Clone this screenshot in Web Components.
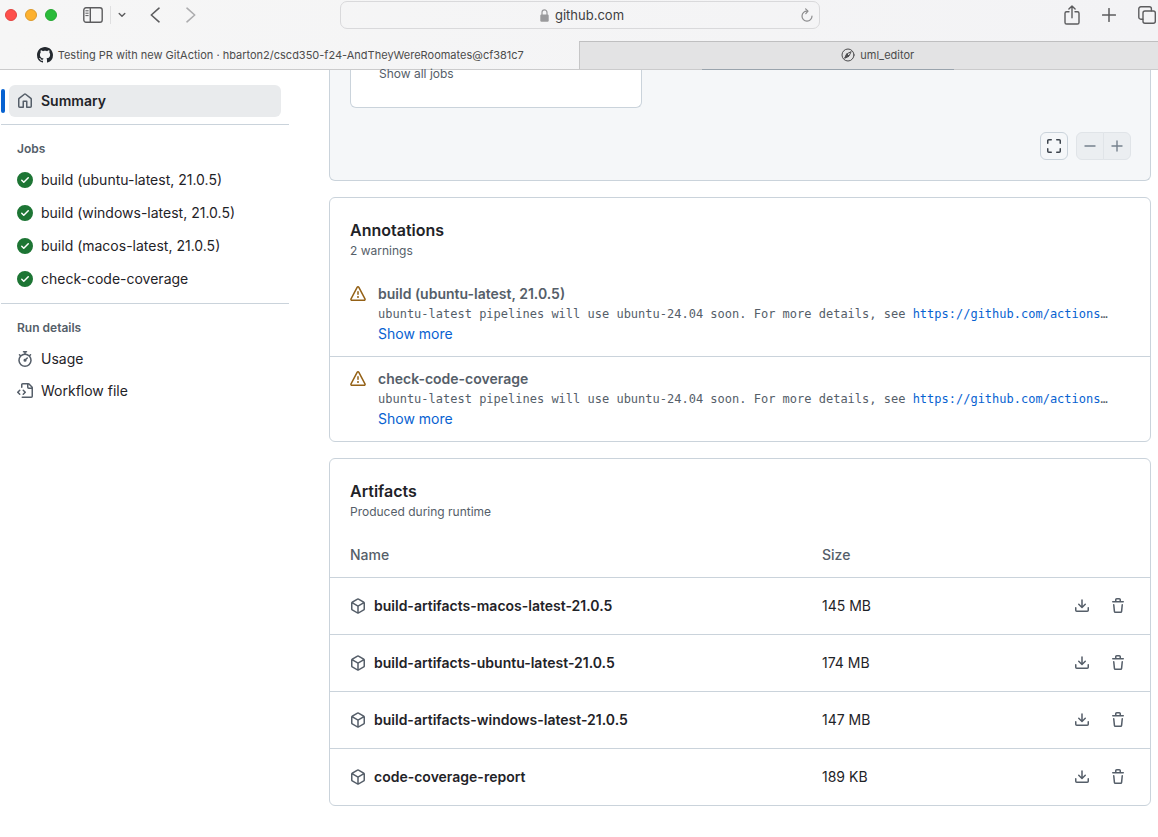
<!DOCTYPE html>
<html lang="en">
<head>
<meta charset="utf-8">
<meta name="viewport" content="width=device-width, initial-scale=1">
<title>Testing PR with new GitAction</title>
<style>
  :root {
    --fg: #1f2328;
    --muted: #555e69;
    --border: #cad3db;
    --accent: #0762d1;
    --success: #1d7534;
    --warning: #946116;
    --canvas: #f5f7f9;
  }
  body {
    margin: 0;
    background: #fff;
    color: var(--fg);
    font: 14px/20px Inter, "Liberation Sans", sans-serif;
  }
</style>
</head>
<body>
<run-page></run-page>

<script>
const define = (name, html, setup) => {
  const template = document.createElement('template');
  template.innerHTML = html;
  customElements.define(name, class extends HTMLElement {
    constructor() {
      super();
      this.attachShadow({ mode: 'open' }).append(template.content.cloneNode(true));
    }
    connectedCallback() { if (setup) setup(this, this.shadowRoot); }
  });
};

/* Filled 16px icons */
const ICONS = {
  home: 'M6.906.664a1.749 1.749 0 0 1 2.187 0l5.25 4.2c.415.332.657.835.657 1.367v7.019A1.75 1.75 0 0 1 13.25 15h-3.5a.75.75 0 0 1-.75-.75V9H7v5.25a.75.75 0 0 1-.75.75h-3.5A1.75 1.75 0 0 1 1 13.25V6.23c0-.531.242-1.034.657-1.366l5.25-4.2Zm1.25 1.171a.25.25 0 0 0-.312 0l-5.25 4.2a.25.25 0 0 0-.094.196v7.019c0 .138.112.25.25.25H5.5V8.25a.75.75 0 0 1 .75-.75h3.5a.75.75 0 0 1 .75.75v5.25h2.75a.25.25 0 0 0 .25-.25V6.23a.25.25 0 0 0-.094-.195Z',
  check: 'M8 16A8 8 0 1 1 8 0a8 8 0 0 1 0 16Zm3.78-9.72a.751.751 0 0 0-.018-1.042.751.751 0 0 0-1.042-.018L6.75 9.19 5.28 7.72a.751.751 0 0 0-1.042.018.751.751 0 0 0-.018 1.042l2 2a.75.75 0 0 0 1.06 0Z',
  stopwatch: 'M5.75.75A.75.75 0 0 1 6.5 0h3a.75.75 0 0 1 0 1.5h-.75v1l-.001.041a6.724 6.724 0 0 1 3.464 1.435l.007-.006.75-.75a.749.749 0 0 1 1.275.326.749.749 0 0 1-.215.734l-.75.75-.006.007a6.75 6.75 0 1 1-10.548 0L2.72 5.03l-.75-.75a.751.751 0 0 1 .018-1.042.751.751 0 0 1 1.042-.018l.75.75.007.006A6.72 6.72 0 0 1 7.25 2.541V1.5H6.5a.75.75 0 0 1-.75-.75ZM8 14.5a5.25 5.25 0 1 0-.001-10.501A5.25 5.25 0 0 0 8 14.5Zm.389-6.7 1.33-1.33a.75.75 0 1 1 1.061 1.06L9.45 8.861A1.503 1.503 0 0 1 8 10.75a1.499 1.499 0 1 1 .389-2.95Z',
  workflow: 'M4 1.75C4 .784 4.784 0 5.75 0h5.586c.464 0 .909.184 1.237.513l2.914 2.914c.329.328.513.773.513 1.237v8.586A1.75 1.75 0 0 1 14.25 15h-9a.75.75 0 0 1 0-1.5h9a.25.25 0 0 0 .25-.25V6h-2.75A1.75 1.75 0 0 1 10 4.25V1.5H5.75a.25.25 0 0 0-.25.25v2.5a.75.75 0 0 1-1.5 0Zm1.72 4.97a.75.75 0 0 1 1.06 0l2 2a.75.75 0 0 1 0 1.06l-2 2a.749.749 0 0 1-1.275-.326.749.749 0 0 1 .215-.734l1.47-1.47-1.47-1.47a.75.75 0 0 1 0-1.06ZM3.28 7.78 1.81 9.25l1.47 1.47a.751.751 0 0 1-.018 1.042.751.751 0 0 1-1.042.018l-2-2a.75.75 0 0 1 0-1.06l2-2a.751.751 0 0 1 1.042.018.751.751 0 0 1 .018 1.042Zm8.22-6.218V4.25c0 .138.112.25.25.25h2.688l-.011-.013-2.914-2.914-.013-.011Z',
  alert: 'M6.457 1.047c.659-1.234 2.427-1.234 3.086 0l6.082 11.378A1.75 1.75 0 0 1 14.082 15H1.918a1.75 1.75 0 0 1-1.543-2.575Zm1.763.707a.25.25 0 0 0-.44 0L1.698 13.132a.25.25 0 0 0 .22.368h12.164a.25.25 0 0 0 .22-.368Zm.53 3.996v2.5a.75.75 0 0 1-1.5 0v-2.5a.75.75 0 0 1 1.5 0ZM9 11a1 1 0 1 1-2 0 1 1 0 0 1 2 0Z',
  package: 'm8.878.392 5.25 3.045c.54.314.872.89.872 1.514v6.098a1.75 1.75 0 0 1-.872 1.514l-5.25 3.045a1.75 1.75 0 0 1-1.756 0l-5.25-3.045A1.75 1.75 0 0 1 1 11.049V4.951c0-.624.332-1.201.872-1.514L7.122.392a1.75 1.75 0 0 1 1.756 0ZM7.875 1.69l-4.63 2.685L8 7.133l4.755-2.758-4.63-2.685a.248.248 0 0 0-.25 0ZM2.5 5.677v5.372c0 .09.047.171.125.216l4.625 2.683V8.432Zm6.25 8.271 4.625-2.683a.25.25 0 0 0 .125-.216V5.677L8.75 8.432Z',
  download: 'M2.75 14A1.75 1.75 0 0 1 1 12.25v-2.5a.75.75 0 0 1 1.5 0v2.5c0 .138.112.25.25.25h10.5a.25.25 0 0 0 .25-.25v-2.5a.75.75 0 0 1 1.5 0v2.5A1.75 1.75 0 0 1 13.25 14Z M7.25 7.689V2a.75.75 0 0 1 1.5 0v5.689l1.97-1.969a.749.749 0 1 1 1.06 1.06l-3.25 3.25a.749.749 0 0 1-1.06 0L4.22 6.78a.749.749 0 1 1 1.06-1.06l1.97 1.969Z',
  trash: 'M11 1.75V3h2.25a.75.75 0 0 1 0 1.5H2.75a.75.75 0 0 1 0-1.5H5V1.75C5 .784 5.784 0 6.75 0h2.5C10.216 0 11 .784 11 1.75ZM4.496 6.675l.66 6.6a.25.25 0 0 0 .249.225h5.19a.25.25 0 0 0 .249-.225l.66-6.6a.75.75 0 0 1 1.492.149l-.66 6.6A1.748 1.748 0 0 1 10.595 15h-5.19a1.75 1.75 0 0 1-1.741-1.575l-.66-6.6a.75.75 0 1 1 1.492-.15ZM6.5 1.75V3h3V1.75a.25.25 0 0 0-.25-.25h-2.5a.25.25 0 0 0-.25.25Z',
  github: 'M8 0c4.42 0 8 3.58 8 8a8.013 8.013 0 0 1-5.45 7.59c-.4.08-.55-.17-.55-.38 0-.27.01-1.13.01-2.2 0-.75-.25-1.23-.54-1.48 1.78-.2 3.65-.88 3.65-3.95 0-.88-.31-1.59-.82-2.15.08-.2.36-1.02-.08-2.12 0 0-.67-.22-2.2.82-.64-.18-1.32-.27-2-.27-.68 0-1.36.09-2 .27-1.53-1.03-2.2-.82-2.2-.82-.44 1.1-.16 1.92-.08 2.12-.51.56-.82 1.28-.82 2.15 0 3.06 1.86 3.75 3.64 3.95-.23.2-.44.55-.51 1.07-.46.21-1.61.55-2.33-.66-.15-.24-.6-.83-1.23-.82-.67.01-.27.38.01.53.34.19.73.9.82 1.13.16.45.68 1.31 2.69.94 0 .67.01 1.3.01 1.49 0 .21-.15.45-.55.38A7.995 7.995 0 0 1 0 8c0-4.42 3.58-8 8-8Z',
  fullscreen: 'M1.75 10a.75.75 0 0 1 .75.75v2.5c0 .138.112.25.25.25h2.5a.75.75 0 0 1 0 1.5h-2.5A1.75 1.75 0 0 1 1 13.25v-2.5a.75.75 0 0 1 .75-.75Zm12.5 0a.75.75 0 0 1 .75.75v2.5A1.75 1.75 0 0 1 13.25 15h-2.5a.75.75 0 0 1 0-1.5h2.5a.25.25 0 0 0 .25-.25v-2.5a.75.75 0 0 1 .75-.75ZM2.75 2.5a.25.25 0 0 0-.25.25v2.5a.75.75 0 0 1-1.5 0v-2.5C1 1.784 1.784 1 2.75 1h2.5a.75.75 0 0 1 0 1.5ZM10 1.75a.75.75 0 0 1 .75-.75h2.5c.966 0 1.75.784 1.75 1.75v2.5a.75.75 0 0 1-1.5 0v-2.5a.25.25 0 0 0-.25-.25h-2.5a.75.75 0 0 1-.75-.75Z'
};

/* Stroked icons: [width, height, stroke width, markup] */
const LINES = {
  sidebar: [20, 16, 1.4, '<rect x=".8" y=".8" width="18.4" height="14.4" rx="2.2"/><path d="M7.3 1v14"/><path d="M2.8 3.8h2.4M2.8 6.2h2.4M2.8 8.6h2.4" stroke-width="1"/>'],
  chevron: [8, 6, 1.4, '<path d="M1.2 1.4 4 4.200l2.800-2.800"/>'],
  back: [10, 16, 1.6, '<path d="M9 1.2 1.3 8 9 14.8"/>'],
  forward: [10, 16, 1.6, '<path d="M1 1.2 8.7 8 1 14.8"/>'],
  reload: [12, 14, 1.2, '<path d="M6.300 3.100A5 5 0 1 0 11 8"/><path d="M4.600.8 7 3.200 4.800 5.600"/>'],
  share: [16, 20, 1.4, '<path d="M5 6.7H2.6A1.6 1.6 0 0 0 1 8.3V17.4A1.6 1.6 0 0 0 2.6 19H13.4A1.6 1.6 0 0 0 15 17.4V8.3A1.6 1.6 0 0 0 13.4 6.7H11M8 12.8V1M4.9 3.9 8 .9l3.1 3"/>'],
  plus: [14, 14, 1.5, '<path d="M7 .6v12.8M.6 7h12.8"/>'],
  tabs: [18, 18, 1.4, '<rect x="5" y="5" width="12.3" height="12.3" rx="2"/><path d="M4.8 13.2H2.8a2 2 0 0 1-2-2V2.8a2 2 0 0 1 2-2h8.6a2 2 0 0 1 2 2V4.7"/>'],
  compass: [14, 14, 1, '<circle cx="7" cy="7" r="6"/><path d="M10 4 8 8 4 10 6 6Z"/><path d="M4 10 8 8 6 6Z" fill="currentColor"/>'],
  minus: [16, 16, 1.4, '<path d="M3 8h10"/>'],
  zoomin: [16, 16, 1.4, '<path d="M3 8h10M8 3v10"/>']
};

define('ui-icon', `
  <style>
    :host { display: inline-flex; flex: none; }
    svg { display: block; }
  </style>`, (el, root) => {
  const name = el.getAttribute('name');
  if (root.querySelector('svg')) return;
  const holder = document.createElement('template');
  if (ICONS[name]) {
    holder.innerHTML = `<svg width="16" height="16" viewBox="0 0 16 16" fill="currentColor" aria-hidden="true"><path d="${ICONS[name]}"/></svg>`;
  } else {
    const [w, h, s, body] = LINES[name];
    holder.innerHTML = `<svg width="${w}" height="${h}" viewBox="0 0 ${w} ${h}" fill="none" stroke="currentColor" stroke-width="${s}" stroke-linecap="round" stroke-linejoin="round" aria-hidden="true">${body}</svg>`;
  }
  root.append(holder.content);
});

define('browser-tab', `
  <style>
    :host {
      display: block; flex: 1 1 0; min-width: 0; box-sizing: border-box;
      border-top: 1px solid transparent; padding: 0 18px 2px 0;
      color: #4c4c4c; font-size: 11px; line-height: 16px;
    }
    :host([background]) {
      background: #e3e3e4; border-top-color: #bfbfc0; border-left: 1px solid #c6c6c7;
      padding: 0 0 2px 18px;
    }
    a {
      display: flex; align-items: center; justify-content: center; gap: 5px;
      height: 100%; color: inherit; text-decoration: none; white-space: nowrap;
    }
    ::slotted(ui-icon) { color: #24292f; }
    :host([background]) ::slotted(ui-icon) { color: #4c4c4e; }
  </style>
  <a href="#"><slot name="icon"></slot><slot></slot></a>`);

define('browser-chrome', `
  <style>
    :host { display: block; background: linear-gradient(90deg, #f6f6f6, #f3f3f5); border-bottom: 1px solid #cbcbcc; }
    .toolbar {
      display: grid; grid-template-columns: 1fr minmax(0, 480px) 1fr; align-items: center;
      padding: 1px 0 12px 2px;
    }
    .side { display: flex; align-items: center; color: #5c5c5e; }
    .lights { display: flex; gap: 8px; margin: 0 26px 0 3px; }
    .lights button { width: 12px; height: 12px; border-radius: 50%; box-sizing: border-box; }
    .close { background: #fe4f4b; border: 1px solid #e2443f; }
    .min { background: #fdb12f; border: 1px solid #dc9a2c; }
    .max { background: #2abb3a; border: 1px solid #26a834; }
    button { display: flex; padding: 0; border: 0; background: none; color: inherit; font: inherit; }
    .menu { height: 18px; align-items: center; margin-left: 7px; padding-left: 7px; border-left: 1px solid #dfdfe0; }
    .back { margin-left: 24px; }
    .forward { margin-left: 26px; color: #acacae; }
    .address {
      display: flex; align-items: center; height: 28px; box-sizing: border-box;
      border: 1px solid #d9d9db; border-radius: 7px; padding: 0 6px 0 22px;
    }
    .where { flex: 1; display: flex; align-items: center; justify-content: center; gap: 6px; }
    input {
      field-sizing: content; width: auto; padding: 0; border: 0; outline: 0; background: none;
      color: #3f3f41; font: 13px/18px Inter, "Liberation Sans", sans-serif;
    }
    .reload { color: #8b8b8d; }
    .end { justify-content: flex-end; gap: 22px; padding-right: 2px; }
    .tabs { display: flex; height: 28px; }
  </style>
  <div class="toolbar">
    <div class="side">
      <div class="lights">
        <button class="close" aria-label="Close"></button>
        <button class="min" aria-label="Minimise"></button>
        <button class="max" aria-label="Zoom"></button>
      </div>
      <button aria-label="Sidebar"><ui-icon name="sidebar"></ui-icon></button>
      <button class="menu" aria-label="Tab groups"><ui-icon name="chevron"></ui-icon></button>
      <button class="back" aria-label="Back"><ui-icon name="back"></ui-icon></button>
      <button class="forward" aria-label="Forward"><ui-icon name="forward"></ui-icon></button>
    </div>
    <div class="address">
      <div class="where">
        <svg width="9" height="13" viewBox="0 0 9 13" aria-hidden="true"><rect x=".3" y="5.5" width="8.4" height="7.3" rx="1.2" fill="#9a9a9c"/><path d="M2 6V3.5a2.5 2.7 0 0 1 5 0V6" fill="none" stroke="#9a9a9c" stroke-width="1.2"/></svg>
        <input type="text" value="github.com" aria-label="Address">
      </div>
      <button class="reload" aria-label="Reload"><ui-icon name="reload"></ui-icon></button>
    </div>
    <div class="side end">
      <button aria-label="Share"><ui-icon name="share"></ui-icon></button>
      <button aria-label="New tab"><ui-icon name="plus"></ui-icon></button>
      <button aria-label="Tab overview"><ui-icon name="tabs"></ui-icon></button>
    </div>
  </div>
  <div class="tabs"><slot></slot></div>`);

define('nav-item', `
  <style>
    :host { display: block; color: var(--muted); }
    :host([status]) { color: var(--success); }
    a {
      display: flex; align-items: center; gap: 8px; height: 32px; box-sizing: border-box;
      margin: 0 8px; padding: 0 8px; border-radius: 6px; color: inherit; text-decoration: none;
    }
    span { color: var(--fg); }
    :host([current]) { display: flex; align-items: center; }
    :host([current])::before { content: ""; width: 4px; height: 24px; border-radius: 6px; background: var(--accent); }
    :host([current]) a { flex: 1; margin-left: 4px; background: #e9ebed; font-weight: 600; }
  </style>
  <a href="#"><slot name="icon"></slot><span><slot></slot></span></a>`);

define('nav-group', `
  <style>
    :host { display: block; border-top: 1px solid var(--border); padding: 15px 0 8px; }
    h2 { margin: 0 16px 6px; color: var(--muted); font-size: 12px; line-height: 18px; font-weight: 600; }
    div { display: grid; }
    :host([spaced]) div { gap: 1px; }
  </style>
  <h2><slot name="title"></slot></h2>
  <div><slot></slot></div>`);

define('content-card', `
  <style>
    :host { display: block; border: 1px solid var(--border); border-radius: 6px; background: #fff; }
    header { padding: 20px 20px 12px; }
    h2 { margin: 0; font-size: 16px; line-height: 24px; font-weight: 600; }
    p { margin: 0; color: var(--muted); font-size: 12px; line-height: 18px; }
  </style>
  <header><h2><slot name="title"></slot></h2><p><slot name="subtitle"></slot></p></header>
  <slot></slot>`);

define('run-graph', `
  <style>
    :host {
      display: block; border: 1px solid var(--border); border-top: 0;
      border-radius: 0 0 6px 6px; background: var(--canvas);
    }
    .nodes { display: flex; align-items: flex-start; gap: 60px; padding: 0 20px; }
    .node {
      flex: 0 1 292px; box-sizing: border-box; border: 1px solid var(--border); border-top: 0;
      border-radius: 0 0 6px 6px; background: #fff; padding: 0 28px 24px;
    }
    a { display: block; color: var(--muted); font-size: 12px; line-height: 18px; text-decoration: none; margin-top: -5px; }
    .next { flex: 0 1 252px; height: 1px; margin-top: -1px; background: #9aa4ad; }
    .tools { display: flex; justify-content: flex-end; gap: 8px; padding: 24px 19px 20px; }
    .zoom { display: flex; }
    button {
      display: flex; align-items: center; justify-content: center; width: 28px; height: 28px;
      box-sizing: border-box; padding: 0; border: 1px solid var(--border); border-radius: 6px;
      background: var(--canvas); color: #3d444d;
    }
    .zoom button { background: #ebeef1; border-color: #e0e4e8; color: #76818d; }
    .zoom button:first-child { border-radius: 6px 0 0 6px; }
    .zoom button:last-child { border-radius: 0 6px 6px 0; margin-left: -1px; }
  </style>
  <div class="nodes">
    <div class="node"><a href="#">Show all jobs</a></div>
    <div class="next"></div>
  </div>
  <div class="tools">
    <button aria-label="Full screen"><ui-icon name="fullscreen"></ui-icon></button>
    <div class="zoom">
      <button aria-label="Zoom out"><ui-icon name="minus"></ui-icon></button>
      <button aria-label="Zoom in"><ui-icon name="zoomin"></ui-icon></button>
    </div>
  </div>`);

define('run-annotation', `
  <style>
    :host { display: flex; gap: 12px; padding: 12px 20px; }
    :host(:not(:last-of-type)) { border-bottom: 1px solid var(--border); }
    .mark { color: var(--warning); margin-top: 2px; }
    .body { min-width: 0; flex: 1; }
    h3 { margin: 0; color: var(--muted); font-size: 14px; line-height: 20px; font-weight: 600; }
    p {
      margin: 0; color: var(--muted); font: 12px/20px "DejaVu Sans Mono", "Liberation Mono", monospace;
      white-space: nowrap; overflow: hidden; text-overflow: ellipsis;
    }
    a { color: var(--accent); text-decoration: none; }
    button { display: block; padding: 0; border: 0; background: none; color: var(--accent); font: inherit; }
  </style>
  <ui-icon class="mark" name="alert"></ui-icon>
  <div class="body">
    <h3><slot></slot></h3>
    <p>ubuntu-latest pipelines will use ubuntu-24.04 soon. For more details, see <a href="#">https://github.com/actions</a>…</p>
    <button>Show more</button>
  </div>`);

const ARTIFACTS = [
  ['build-artifacts-macos-latest-21.0.5', '145 MB'],
  ['build-artifacts-ubuntu-latest-21.0.5', '174 MB'],
  ['build-artifacts-windows-latest-21.0.5', '147 MB'],
  ['code-coverage-report', '189 KB']
];

define('artifact-table', `
  <style>
    :host { display: block; }
    table { width: 100%; border-collapse: separate; border-spacing: 0; table-layout: fixed; }
    th, td { padding: 0; text-align: left; height: 56px; }
    th { height: 44px; color: var(--muted); font-weight: 500; }
    td { border-top: 1px solid var(--border); }
    th:first-child { width: 60%; }
    th:first-child, td:first-child { padding-left: 20px; box-sizing: border-box; }
    .name { display: flex; align-items: center; gap: 8px; color: var(--muted); }
    .name a { color: var(--fg); font-weight: 600; text-decoration: none; }
    .actions { display: flex; justify-content: flex-end; gap: 4px; padding-right: 16px; }
    button {
      display: flex; align-items: center; justify-content: center; width: 32px; height: 32px;
      padding: 0; border: 0; border-radius: 6px; background: none; color: var(--muted);
    }
  </style>
  <table>
    <thead><tr><th scope="col">Name</th><th scope="col">Size</th><th></th></tr></thead>
    <tbody>${ARTIFACTS.map(([name, size]) => `
      <tr>
        <td><div class="name"><ui-icon name="package"></ui-icon><a href="#">${name}</a></div></td>
        <td>${size}</td>
        <td><div class="actions">
          <button aria-label="Download ${name}"><ui-icon name="download"></ui-icon></button>
          <button aria-label="Delete ${name}"><ui-icon name="trash"></ui-icon></button>
        </div></td>
      </tr>`).join('')}
    </tbody>
  </table>`);

define('run-page', `
  <style>
    :host { display: block; }
    .layout { display: flex; gap: 40px; padding: 0 7px 31px 1px; }
    nav { flex: 0 0 288px; padding-top: 15px; }
    .summary { margin-bottom: 7px; }
    main { flex: 1; min-width: 0; display: grid; gap: 16px; align-content: start; }
  </style>
  <browser-chrome>
    <browser-tab><ui-icon slot="icon" name="github"></ui-icon>Testing PR with new GitAction · hbarton2/cscd350-f24-AndTheyWereRoomates@cf381c7</browser-tab>
    <browser-tab background><ui-icon slot="icon" name="compass"></ui-icon>uml_editor</browser-tab>
  </browser-chrome>
  <div class="layout">
    <nav aria-label="Workflow run">
      <nav-item class="summary" current><ui-icon slot="icon" name="home"></ui-icon>Summary</nav-item>
      <nav-group spaced>
        <span slot="title">Jobs</span>
        <nav-item status><ui-icon slot="icon" name="check"></ui-icon>build (ubuntu-latest, 21.0.5)</nav-item>
        <nav-item status><ui-icon slot="icon" name="check"></ui-icon>build (windows-latest, 21.0.5)</nav-item>
        <nav-item status><ui-icon slot="icon" name="check"></ui-icon>build (macos-latest, 21.0.5)</nav-item>
        <nav-item status><ui-icon slot="icon" name="check"></ui-icon>check-code-coverage</nav-item>
      </nav-group>
      <nav-group>
        <span slot="title">Run details</span>
        <nav-item><ui-icon slot="icon" name="stopwatch"></ui-icon>Usage</nav-item>
        <nav-item><ui-icon slot="icon" name="workflow"></ui-icon>Workflow file</nav-item>
      </nav-group>
    </nav>
    <main>
      <run-graph></run-graph>
      <content-card>
        <span slot="title">Annotations</span>
        <span slot="subtitle">2 warnings</span>
        <run-annotation>build (ubuntu-latest, 21.0.5)</run-annotation>
        <run-annotation>check-code-coverage</run-annotation>
      </content-card>
      <content-card>
        <span slot="title">Artifacts</span>
        <span slot="subtitle">Produced during runtime</span>
        <artifact-table></artifact-table>
      </content-card>
    </main>
  </div>`);
</script>
</body>
</html>
